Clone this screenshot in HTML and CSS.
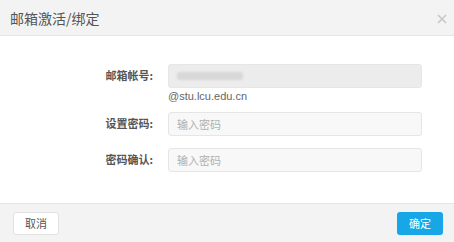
FILE: index.html
```html
<!DOCTYPE html>
<html lang="zh">

<head>
  <meta charset="UTF-8" />
  <title>邮箱激活/绑定</title>
  <link rel="stylesheet" href="styles.css">
</head>

<body>
  <div class="dialog">
    <div class="dialog-header">
      <span class="dialog-title">邮箱激活/绑定</span>
      <svg class="dialog-close" width="10" height="10" viewBox="0 0 10 10">
        <path d="M1 1L9 9M9 1L1 9" stroke="#c6c6c6" stroke-width="1.6" fill="none" />
      </svg>
    </div>

    <form class="dialog-body" onsubmit="event.preventDefault();">
      <div class="row row-first">
        <label class="row-label">邮箱帐号:</label>
        <div class="row-field">
          <div class="input input-disabled"><span class="blurred"></span></div>
          <div class="hint">@stu.lcu.edu.cn</div>
        </div>
      </div>

      <div class="row">
        <label class="row-label" for="pwd">设置密码:</label>
        <div class="row-field">
          <input class="input" id="pwd" type="password" placeholder="输入密码" />
        </div>
      </div>

      <div class="row">
        <label class="row-label" for="pwd2">密码确认:</label>
        <div class="row-field">
          <input class="input" id="pwd2" type="password" placeholder="输入密码" />
        </div>
      </div>
    </form>

    <div class="dialog-footer">
      <button class="btn btn-cancel" type="button">取消</button>
      <button class="btn btn-ok" type="button">确定</button>
    </div>
  </div>
</body>

</html>
```

FILE: styles.css
```css
* {
  box-sizing: border-box;
}

body {
  margin: 0;
  font-family: "Noto Sans CJK SC", "Liberation Sans", sans-serif;
  background: #fff;
  color: #555;
}

.dialog {
  width: 454px;
  height: 242px;
  display: flex;
  flex-direction: column;
}

.dialog-header {
  height: 36px;
  background: #f3f3f3;
  border-bottom: 1px solid #e6e6e6;
  display: flex;
  align-items: center;
  justify-content: space-between;
  padding: 0 7px 0 10px;
}

.dialog-title {
  font-size: 14px;
  color: #555;
}

.dialog-close {
  margin-top: 3px;
}

.dialog-body {
  flex: 1;
  padding-top: 28px;
  margin: 0;
}

.row {
  display: flex;
  margin-bottom: 12px;
}

.row-first {
  margin-bottom: 10px;
}

.row-label {
  width: 155px;
  text-align: right;
  font-size: 11px;
  font-weight: bold;
  color: #555;
  line-height: 23px;
  padding-right: 2px;
}

.row-field {
  margin-left: 13px;
  width: 254px;
}

.input {
  display: block;
  width: 100%;
  height: 24px;
  border: 1px solid #e6e6e6;
  border-radius: 3px;
  background: #f8f8f8;
  padding: 0 8px;
  font-family: inherit;
  font-size: 11px;
  color: #555;
  outline: none;
}

.input::placeholder {
  color: #b0b0b0;
}

.input-disabled {
  background: #ececec;
  display: flex;
  align-items: center;
}

.blurred {
  display: block;
  width: 66px;
  height: 8px;
  background: #d8d8d8;
  border-radius: 2px;
  filter: blur(1px);
}

.hint {
  font-family: "Liberation Sans", sans-serif;
  font-size: 11px;
  line-height: 12px;
  color: #666;
  margin-top: 2px;
}

.dialog-footer {
  height: 39px;
  background: #f3f3f3;
  border-top: 1px solid #e6e6e6;
  display: flex;
  align-items: center;
  justify-content: space-between;
  padding: 0 11px 0 13px;
}

.btn {
  width: 46px;
  height: 23px;
  border-radius: 3px;
  font-family: inherit;
  font-size: 11px;
  cursor: pointer;
  padding: 0;
}

.btn-cancel {
  background: #fff;
  border: 1px solid #e2e2e2;
  color: #555;
}

.btn-ok {
  background: #17a6e6;
  border: none;
  color: #fff;
}
```
